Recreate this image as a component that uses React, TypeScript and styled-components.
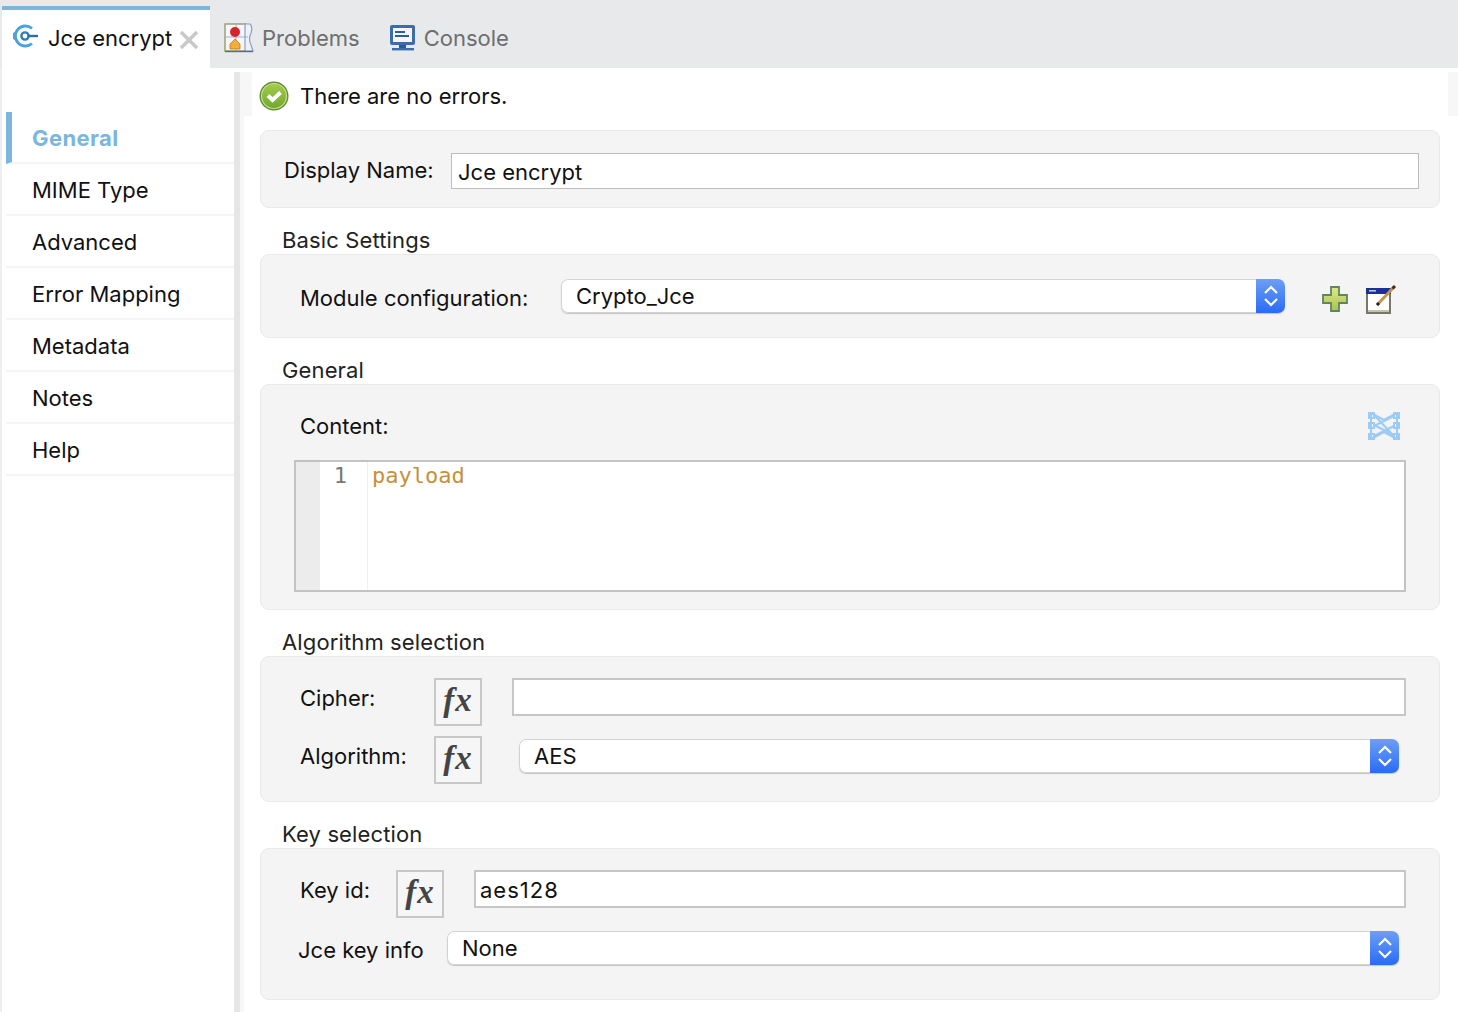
import React from "react";
import styled, { createGlobalStyle } from "styled-components";

const GlobalStyle = createGlobalStyle`
  html, body {
    margin: 0;
    padding: 0;
    background: #fff;
  }
  body {
    font-family: Inter, "Liberation Sans", sans-serif;
    color: #111;
    overflow: hidden;
  }
  * {
    box-sizing: border-box;
  }
`;

const FONT_SIZE = "22px";

const ConnectorIcon = () => (
  <svg width="30" height="30" viewBox="1 2 30 30">
    <path d="M21 7.5 A10 10 0 1 0 21 22.5" fill="none" stroke="#4aa3dc" strokeWidth="2.8" />
    <path d="M2 12 L5 10.5 L5 19.5 L2 18Z" fill="#4aa3dc" />
    <circle cx="14" cy="15" r="3.6" fill="none" stroke="#2f7fb5" strokeWidth="2.4" />
    <rect x="17" y="13.8" width="10" height="2.4" fill="#2f6f9f" />
  </svg>
);

const CloseIcon = () => (
  <svg width="20" height="20" viewBox="0 0 20 20">
    <path d="M2 2 L18 18 M18 2 L2 18" stroke="#c9c9c9" strokeWidth="3.6" />
  </svg>
);

const ProblemsIcon = () => (
  <svg width="30" height="30" viewBox="0 0 30 30">
    <rect x="1" y="1" width="21" height="27" fill="#f4f6fa" stroke="#9a9a70" strokeWidth="1.4" />
    <path d="M21 1 H26 Q29 4 27 10 Q24 16 27 22 L29 28 H21Z" fill="#eef2f8" stroke="#8ea0bb" strokeWidth="1.2" />
    <path d="M1 14 H24 M12 1 V28" stroke="#9db3cf" strokeWidth="1" />
    <circle cx="11" cy="9" r="5" fill="#d4252b" />
    <path d="M6 26 V21 L11 16 L16 21 V26Z" fill="#f2ad3b" stroke="#c47a1e" strokeWidth="0.8" />
    <path d="M1 28.5 H29" stroke="#5a6b8c" strokeWidth="1.4" />
  </svg>
);

const ConsoleIcon = () => (
  <svg width="27" height="28" viewBox="0 0 27 28">
    <rect x="1" y="1" width="25" height="20" rx="2" fill="#3b6cab" />
    <rect x="4" y="4" width="19" height="14" fill="#f3f6fb" />
    <rect x="6" y="7" width="10" height="2" fill="#2f5c9a" />
    <rect x="6" y="11" width="14" height="2" fill="#2f5c9a" />
    <rect x="10" y="21" width="7" height="3" fill="#2c5a96" />
    <rect x="3" y="24" width="22" height="2.4" fill="#3b6cab" />
  </svg>
);

const SuccessIcon = () => (
  <svg width="30" height="30" viewBox="0 0 30 30">
    <defs>
      <linearGradient id="okFill" x1="0" y1="0" x2="0" y2="1">
        <stop offset="0" stopColor="#a5cc4e" />
        <stop offset="1" stopColor="#6fa82c" />
      </linearGradient>
    </defs>
    <circle cx="15" cy="15" r="14.5" fill="#5f8f34" />
    <circle cx="15" cy="15" r="12.5" fill="url(#okFill)" stroke="#c9e08e" strokeWidth="1.2" />
    <path d="M9 14.5 L13.5 19 L21.5 11.5" fill="none" stroke="#fff" strokeWidth="4" />
  </svg>
);

const PlusIcon = () => (
  <svg width="26" height="26" viewBox="0 0 26 26">
    <defs>
      <linearGradient id="plusFill" x1="0" y1="0" x2="0" y2="1">
        <stop offset="0" stopColor="#dfe884" />
        <stop offset="1" stopColor="#a9c255" />
      </linearGradient>
    </defs>
    <path
      d="M9 1 H17 V9 H25 V17 H17 V25 H9 V17 H1 V9 H9Z"
      fill="url(#plusFill)"
      stroke="#5f8560"
      strokeWidth="1.8"
    />
  </svg>
);

const EditIcon = () => (
  <svg width="32" height="30" viewBox="0 0 32 30">
    <rect x="2" y="5" width="23" height="24" fill="#fff" stroke="#77776c" strokeWidth="2" />
    <rect x="1" y="4" width="25" height="6" fill="#1d2f93" />
    <rect x="4" y="6" width="7" height="1.6" fill="#b9c3ea" />
    <rect x="3" y="26" width="21" height="2" fill="#c5c3a8" />
    <path d="M12 21 L29 3" stroke="#c4934d" strokeWidth="3" />
    <path d="M27.5 4.5 L30 2" stroke="#3c3026" strokeWidth="3" />
    <path d="M12 21 L14 19" stroke="#222" strokeWidth="3" />
  </svg>
);

const MapperIcon = () => (
  <svg width="34" height="30" viewBox="0 0 34 30" fill="none" stroke="#9ccbf5" strokeWidth="2">
    <rect x="2" y="2" width="5" height="5" />
    <rect x="2" y="12" width="5" height="5" />
    <rect x="2" y="23" width="5" height="5" />
    <rect x="27" y="2" width="5" height="5" />
    <rect x="27" y="12" width="5" height="5" />
    <rect x="27" y="23" width="5" height="5" />
    <path d="M4 2 L17 9 L30 2 M4 28 L17 21 L30 28 M4 2 V28 M30 2 V28" />
    <path d="M7 4 L27 25 M7 15 L27 5 M7 25 L27 15 M7 14 L27 24" />
  </svg>
);

const Page = styled.div`
  display: flex;
  flex-direction: column;
  width: 1458px;
  height: 1012px;
  overflow: hidden;
  background: #fff;
`;

const TabBar = styled.div`
  display: flex;
  align-items: stretch;
  height: 68px;
  flex-shrink: 0;
  background: #e8e9eb;
  padding-left: 2px;
`;

const Tab = styled.div<{ $active?: boolean }>`
  display: flex;
  align-items: center;
  gap: ${(p) => (p.$active ? "6px" : "8px")};
  margin-top: ${(p) => (p.$active ? "6px" : "0")};
  padding: ${(p) => (p.$active ? "0 10px 2px 10px" : "7px 0 0 1px")};
  width: ${(p) => (p.$active ? "208px" : "auto")};
  margin-right: ${(p) => (p.$active ? "13px" : "28px")};
  background: ${(p) => (p.$active ? "#fff" : "transparent")};
  border-top: ${(p) => (p.$active ? "4px solid #7ab6de" : "none")};
  color: ${(p) => (p.$active ? "#111" : "#6e6e6e")};
  font-size: ${FONT_SIZE};
  white-space: nowrap;
`;

const CloseSlot = styled.span`
  display: flex;
  margin: 4px 0 0 1px;
`;

const Body = styled.div`
  display: flex;
  flex: 1;
  min-height: 0;
  border-left: 2px solid #eeeeee;
`;

const Sidebar = styled.nav`
  width: 232px;
  flex-shrink: 0;
  padding: 44px 0 0 4px;
`;

const NavItem = styled.div<{ $active?: boolean }>`
  display: flex;
  align-items: center;
  height: 52px;
  padding: 2px 0 0 ${(p) => (p.$active ? "20px" : "26px")};
  border-left: ${(p) => (p.$active ? "6px solid #7ab6de" : "none")};
  border-bottom: 2px solid #f5f5f5;
  font-size: ${FONT_SIZE};
  font-weight: ${(p) => (p.$active ? 700 : 400)};
  letter-spacing: ${(p) => (p.$active ? "0.4px" : "0")};
  color: ${(p) => (p.$active ? "#7ab6de" : "#111")};
`;

const Splitter = styled.div`
  width: 6px;
  flex-shrink: 0;
  margin-top: 4px;
  background: #e6e6e6;
`;

const Main = styled.main`
  flex: 1;
  min-width: 0;
  margin-top: 4px;
  padding-right: 18px;
  border-left: 4px solid #f7f7f7;
`;

const Message = styled.div`
  display: flex;
  align-items: center;
  gap: 11px;
  height: 44px;
  margin: 0 -18px 14px 0;
  padding: 3px 0 0 7px;
  background: #fff;
  border-left: 8px solid #f7f7f7;
  border-right: 10px solid #f7f7f7;
  font-size: ${FONT_SIZE};
`;

const Content = styled.div`
  padding-left: 16px;
`;

const Panel = styled.section<{ $height: number; $padding: string }>`
  height: ${(p) => p.$height}px;
  padding: ${(p) => p.$padding};
  background: #f4f4f4;
  border: 1px solid #e9e9e9;
  border-radius: 9px;
`;

const SectionTitle = styled.h2`
  margin: 20px 0 2px 22px;
  height: 24px;
  line-height: 24px;
  font-size: ${FONT_SIZE};
  font-weight: 400;
  letter-spacing: 0.13px;
  color: #222;
`;

const Row = styled.div<{ $top?: number; $align?: string; $between?: boolean }>`
  display: flex;
  align-items: ${(p) => p.$align ?? "center"};
  justify-content: ${(p) => (p.$between ? "space-between" : "flex-start")};
  margin-top: ${(p) => p.$top ?? 0}px;
`;

const FieldLabel = styled.label<{ $width: number; $indent?: number; $drop?: number; $lineHeight?: number }>`
  flex-shrink: 0;
  width: ${(p) => p.$width}px;
  margin-left: ${(p) => p.$indent ?? 0}px;
  margin-top: ${(p) => p.$drop ?? 0}px;
  line-height: ${(p) => (p.$lineHeight ? `${p.$lineHeight}px` : "normal")};
  font-size: ${FONT_SIZE};
  color: #111;
`;

const TextInput = styled.div<{ $height?: number; $pad?: number; $thick?: boolean; $track?: number }>`
  flex: 1;
  display: flex;
  align-items: center;
  height: ${(p) => p.$height ?? 38}px;
  padding: 2px 0 0 ${(p) => p.$pad ?? 6}px;
  background: #fff;
  border: ${(p) => (p.$thick ? "2px solid #c6c6c6" : "1px solid #bdbdbd")};
  letter-spacing: ${(p) => p.$track ?? 0}px;
  font-size: ${FONT_SIZE};
  color: #111;
`;

const Select = styled.div<{ $top?: number }>`
  flex: 1;
  display: flex;
  align-items: stretch;
  height: 34px;
  margin-top: ${(p) => p.$top ?? 0}px;
  border-radius: 7px;
  box-shadow: 0 1px 1px #c4c4c4;
  overflow: hidden;
  font-size: ${FONT_SIZE};
  color: #111;
`;

const SelectValue = styled.div`
  flex: 1;
  display: flex;
  align-items: center;
  padding-left: 14px;
  background: #fff;
  border: 1px solid #d2d2d2;
  border-right: none;
  border-radius: 7px 0 0 7px;
`;

const SelectStepper = styled.div`
  display: flex;
  align-items: center;
  justify-content: center;
  width: 29px;
  background: linear-gradient(#6d9ff5, #2a6bf6);
`;

const FxButton = styled.div`
  flex-shrink: 0;
  display: flex;
  align-items: center;
  justify-content: center;
  width: 48px;
  height: 48px;
  padding-bottom: 4px;
  border: 2px solid #c8c8c8;
  background: #f6f6f6;
  font-family: "Liberation Serif", serif;
  font-style: italic;
  font-weight: 700;
  font-size: 33px;
  letter-spacing: 1px;
  color: #444;
`;

const IconGroup = styled.div`
  display: flex;
  align-items: center;
  gap: 17px;
  height: 30px;
  margin-left: 37px;
  padding-top: 5px;
`;

const MapperSlot = styled.div`
  display: flex;
  margin-right: 5px;
`;

const Editor = styled.div`
  display: flex;
  height: 132px;
  margin-top: 19px;
  background: #fff;
  border: 2px solid #c3c3c3;
`;

const EditorFold = styled.div`
  width: 24px;
  background: #ececec;
`;

const EditorGutter = styled.div`
  width: 48px;
  padding-right: 20px;
  border-right: 1px solid #f0f0f0;
  text-align: right;
  font-family: "DejaVu Sans Mono", monospace;
  font-size: 22px;
  line-height: 28px;
  color: #777;
`;

const EditorCode = styled.div`
  flex: 1;
  padding-left: 4px;
  font-family: "DejaVu Sans Mono", monospace;
  font-size: 22px;
  line-height: 28px;
  color: #c4913c;
`;

const Spacer = styled.div<{ $width: number }>`
  flex-shrink: 0;
  width: ${(p) => p.$width}px;
`;

const Stepper = () => (
  <SelectStepper>
    <svg width="16" height="26" viewBox="0 0 16 26" fill="none" stroke="#fff" strokeWidth="2.2">
      <path d="M2 10 L8 4 L14 10 M2 16 L8 22 L14 16" />
    </svg>
  </SelectStepper>
);

const navItems = ["General", "MIME Type", "Advanced", "Error Mapping", "Metadata", "Notes", "Help"];

export default function App() {
  return (
    <Page>
      <GlobalStyle />
      <TabBar>
        <Tab $active>
          <ConnectorIcon />
          Jce encrypt
          <CloseSlot>
            <CloseIcon />
          </CloseSlot>
        </Tab>
        <Tab>
          <ProblemsIcon />
          Problems
        </Tab>
        <Tab>
          <ConsoleIcon />
          Console
        </Tab>
      </TabBar>
      <Body>
        <Sidebar>
          {navItems.map((item, index) => (
            <NavItem key={item} $active={index === 0}>
              {item}
            </NavItem>
          ))}
        </Sidebar>
        <Splitter />
        <Main>
          <Message>
            <SuccessIcon />
            There are no errors.
          </Message>
          <Content>
            <Panel $height={78} $padding="22px 20px 0 23px">
              <Row>
                <FieldLabel $width={167} $drop={-2}>Display Name:</FieldLabel>
                <TextInput $height={36}>Jce encrypt</TextInput>
              </Row>
            </Panel>

            <SectionTitle>Basic Settings</SectionTitle>
            <Panel $height={84} $padding="24px 42px 0 39px">
              <Row>
                <FieldLabel $width={261} $drop={4}>Module configuration:</FieldLabel>
                <Select>
                  <SelectValue>Crypto_Jce</SelectValue>
                  <Stepper />
                </Select>
                <IconGroup>
                  <PlusIcon />
                  <EditIcon />
                </IconGroup>
              </Row>
            </Panel>

            <SectionTitle>General</SectionTitle>
            <Panel $height={226} $padding="26px 33px 0 33px">
              <Row $between>
                <FieldLabel $width={200} $indent={6}>Content:</FieldLabel>
                <MapperSlot>
                  <MapperIcon />
                </MapperSlot>
              </Row>
              <Editor>
                <EditorFold />
                <EditorGutter>1</EditorGutter>
                <EditorCode>payload</EditorCode>
              </Editor>
            </Panel>

            <SectionTitle>Algorithm selection</SectionTitle>
            <Panel $height={146} $padding="21px 33px 0 39px">
              <Row $align="flex-start">
                <FieldLabel $width={134} $lineHeight={40}>Cipher:</FieldLabel>
                <FxButton>fx</FxButton>
                <Spacer $width={30} />
                <TextInput $thick />
              </Row>
              <Row $top={10} $align="flex-start">
                <FieldLabel $width={134} $lineHeight={40}>Algorithm:</FieldLabel>
                <FxButton>fx</FxButton>
                <Spacer $width={37} />
                <Select $top={3}>
                  <SelectValue>AES</SelectValue>
                  <Stepper />
                </Select>
                <Spacer $width={7} />
              </Row>
            </Panel>

            <SectionTitle>Key selection</SectionTitle>
            <Panel $height={152} $padding="21px 33px 0 39px">
              <Row $align="flex-start">
                <FieldLabel $width={96} $lineHeight={40}>Key id:</FieldLabel>
                <FxButton>fx</FxButton>
                <Spacer $width={30} />
                <TextInput $thick $pad={4} $track={1}>aes128</TextInput>
              </Row>
              <Row $top={13}>
                <FieldLabel $width={149} $indent={-2} $drop={4}>Jce key info</FieldLabel>
                <Select>
                  <SelectValue>None</SelectValue>
                  <Stepper />
                </Select>
                <Spacer $width={7} />
              </Row>
            </Panel>
          </Content>
        </Main>
      </Body>
    </Page>
  );
}
